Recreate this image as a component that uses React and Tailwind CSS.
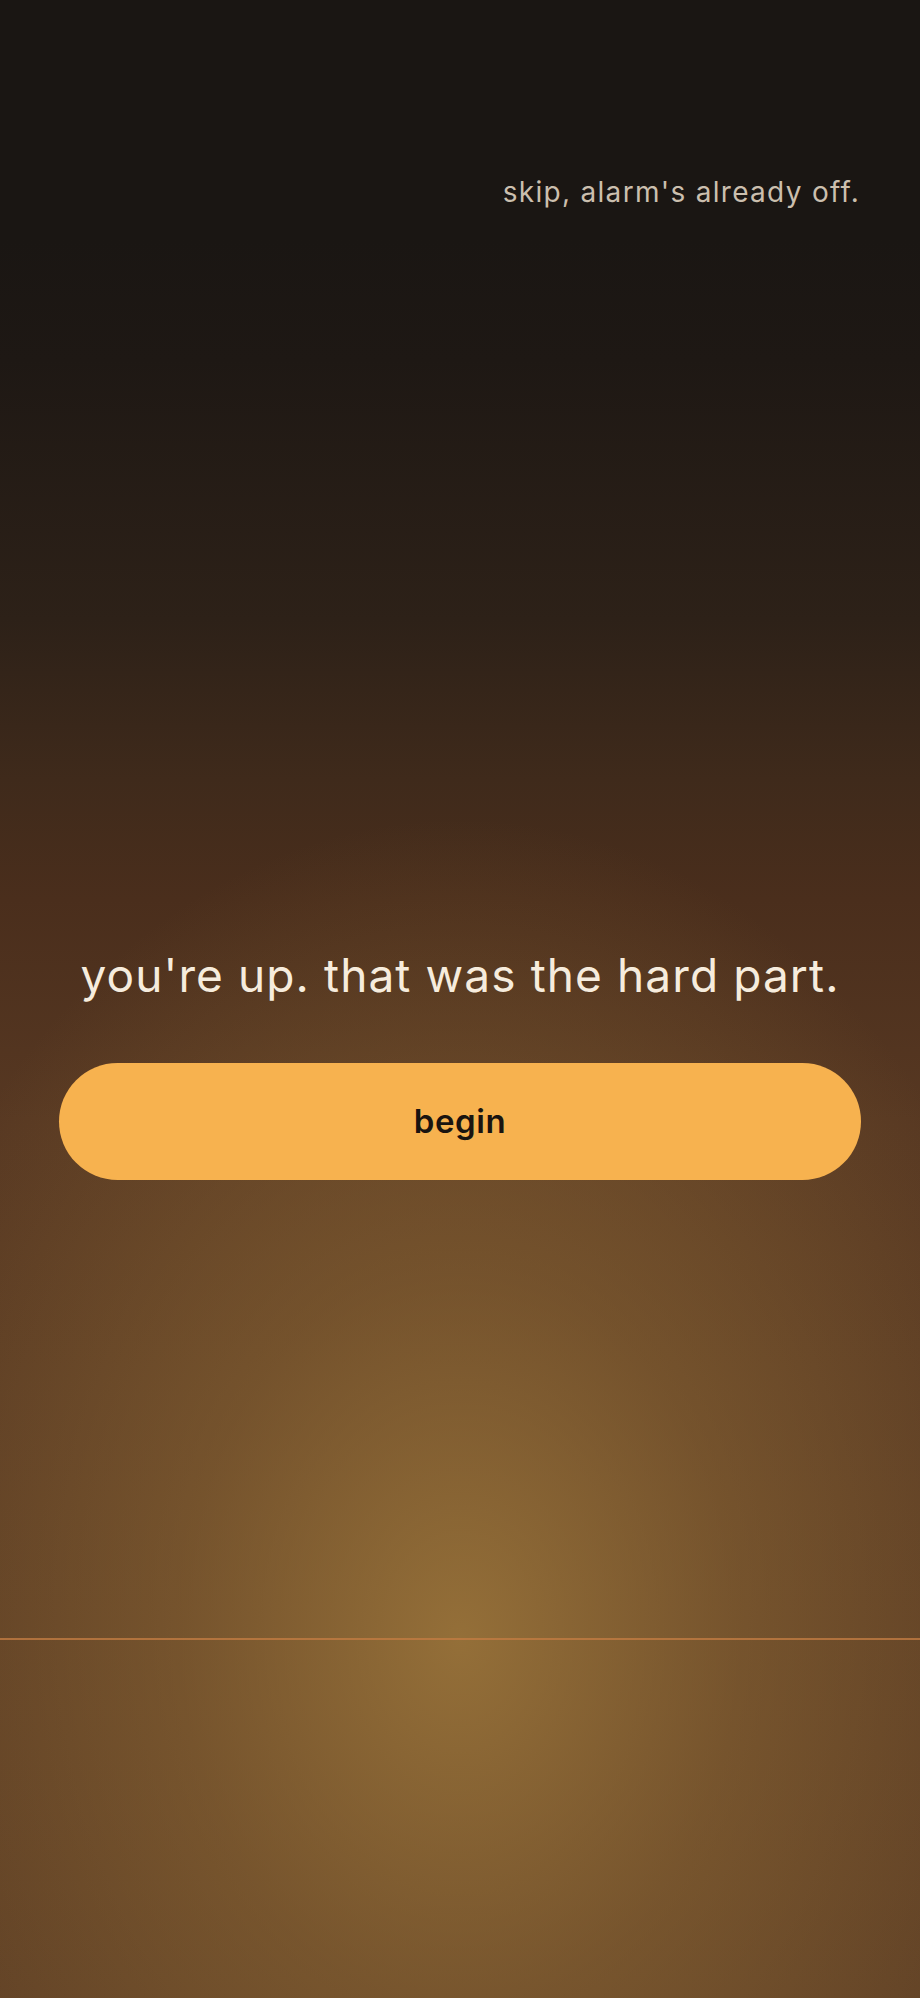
import React from "react";

const App = () => {
  return (
    <div
      className="min-h-screen w-full flex flex-col bg-[radial-gradient(ellipse_620px_820px_at_50%_82%,rgba(158,120,60,0.85)_0%,rgba(150,112,56,0.45)_45%,rgba(140,100,50,0)_100%),linear-gradient(to_bottom,#1a1613_0%,#1a1613_12%,#1e1814_18%,#2d2118_31%,#3f2a1b_39%,#4a2e1c_45%,#573822_56%,#5e3f25_100%)]"
      style={{ fontFamily: "Inter, 'Noto Sans', sans-serif" }}
    >
      {/* skip link */}
      <div className="pt-[176px] pr-[60px] text-right">
        <button className="text-[28px] leading-[32px] text-[#cbbfae] tracking-[1.3px]">
          skip, alarm's already off.
        </button>
      </div>

      {/* main message */}
      <h1 className="mt-[740px] text-center text-[46px] leading-[54px] font-normal text-[#f6ecdd] tracking-[1.1px]">
        you're up. that was the hard part.
      </h1>

      <div className="px-[59px] mt-[61px]">
        <button className="w-full h-[117px] rounded-full bg-[#f7b24f] flex items-center justify-center text-[33px] font-semibold text-[#1a1410] tracking-[0.6px]">
          begin
        </button>
      </div>

      {/* horizon line */}
      <div className="mt-[458px] h-[2px] w-full bg-[#c27c42]/80"></div>
    </div>
  );
};

export default App;
